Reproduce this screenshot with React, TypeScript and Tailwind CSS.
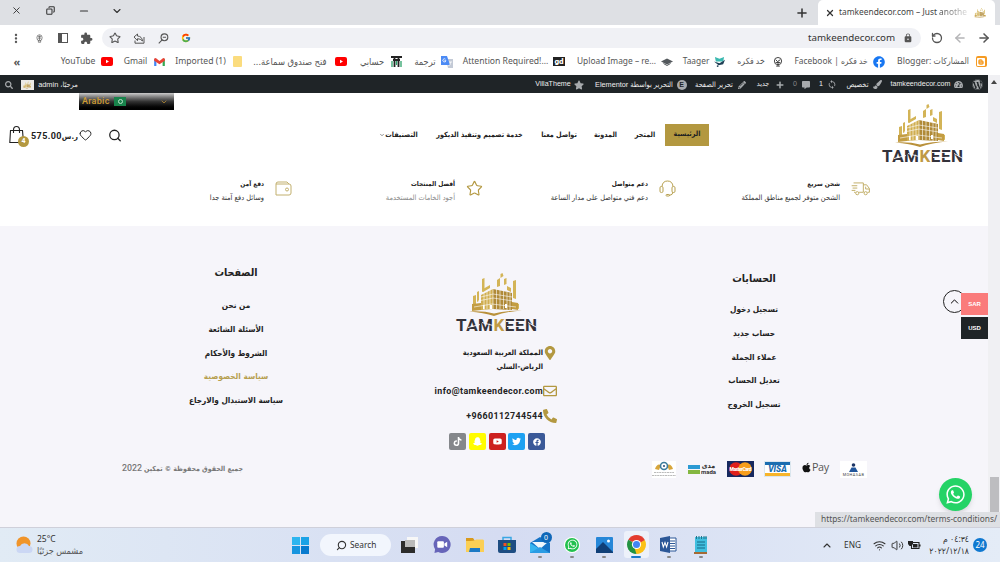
import type { ReactNode } from 'react'
import {
    FaApple, FaCommentAlt, FaFacebook, FaMapMarkerAlt, FaPaintBrush, FaPencilAlt, FaPhoneAlt, FaPlus,
    FaRegEnvelope, FaSearch, FaSnapchatGhost, FaStar, FaTachometerAlt, FaTiktok, FaTwitter, FaWhatsapp,
    FaWordpress, FaYoutube,
} from 'react-icons/fa'
import { FcGoogle } from 'react-icons/fc'
import { MdExtension, MdLock, MdMoreVert, MdSync } from 'react-icons/md'
import { SiBlogger } from 'react-icons/si'
import {
    ArrowLeft, ArrowRight, ChevronDown, ChevronUp, Copy, Heart, Minus, Plus, RotateCcw, Search, Star,
    Volume2, Wifi, X,
} from 'lucide-react'

interface ItemProps {
    box: string
    children?: ReactNode
}

// Fixed-width slot whose content stays centred
function Item({ box, children }: ItemProps) {
    return <div dir="ltr" className={`flex shrink-0 items-center justify-center whitespace-nowrap ${box}`}>{children}</div>
}

function Ar({ children, className = '' }: { children: ReactNode, className?: string }) {
    return <span dir="rtl" className={`whitespace-nowrap ${className}`}>{children}</span>
}

function TamkeenMark({ className }: { className: string }) {
    return (
        <svg viewBox="0 0 82 43" className={className}>
            <g fill="#d3b457">
                <path d="M17 23l3-1v14l-3 1zM21 19l2-1v10l-2 1zM26 6l2.500-1v13l-2.500 1zM41 7l3-2v8l-3 1zM44.500 1l2-1 1 3-3 2zM48 6l2.500-1v6L48 12zM57 8l3-1v19l-3-1zM60 30l3 1v5l-3-1z" />
                <path d="M27 16l7-4v3l-7 4zM51 13l4 2v4l-4-2z" />
            </g>
            <path d="M25 22l12-6v20l-12 1z" fill="#d0ae50" />
            <path d="M37 16l19 4v17l-19-1z" fill="#b08a37" />
            <path d="M16 31l9-1v7l-9 1zM56 29l6 1v7l-6-1z" fill="#c39d42" />
            <path d="M28 19v18M31 18v18M34 17v19M37 15v21M40.500 16v20M44 17v19M47.500 18v18M51 19v18M54 20v17" stroke="#fff" strokeWidth=".6" />
            <path d="M22 28l15-3 20 3M25 24l12-3 19 3M18 34l18-3 24 3" stroke="#fff" strokeWidth=".6" fill="none" />
            <path d="M13 38.500q14-1 25 2Q49 37.500 66 37.500q-16 1-28 5.500-10-3.500-25-4.500z" fill="#b9913b" />
            <path d="M34 32h2v4h-2zM49 31h2v4h-2zM27 32h1.500v4H27z" fill="#fff" />
        </svg>
    )
}

function TamkeenLogo() {
    return (
        <div className="flex h-[60px] w-[82px] flex-col">
            <TamkeenMark className="h-[43px] w-[82px]" />
            <svg viewBox="0 0 82 17" className="h-[17px] w-[82px] overflow-visible">
                <text x="0" y="14.500" fontFamily="Roboto" fontWeight="700" fontSize="17" textLength="81" lengthAdjust="spacing" fill="#33323a">
                    TAM<tspan fill="#c09a46">K</tspan>EEN
                </text>
                <path d="M0 5.700h3M12 11.500l12-3M26 6.500l11 3M50 5.500h18M51 10.500h16M72 6.500l9 5" stroke="#faf9fc" strokeWidth=".9" />
            </svg>
        </div>
    )
}

function TabStrip() {
    return (
        <div className="flex h-[25px] items-center bg-[#dee0e4] text-[#333]">
            <Item box="ml-[9px] -mt-[4px] h-[22px] w-[14px]"><X size={11} strokeWidth={2} /></Item>
            <Item box="ml-[20px] -mt-[4px] h-[22px] w-[14px]"><Copy size={9} strokeWidth={2.8} className="-scale-x-100" /></Item>
            <Item box="ml-[20px] -mt-[4px] h-[22px] w-[14px]"><Minus size={12} strokeWidth={2.4} /></Item>
            <Item box="ml-[19px] -mt-[4px] h-[22px] w-[14px]"><ChevronDown size={12} strokeWidth={2.2} /></Item>
            <Item box="ml-[671px] w-[14px]"><Plus size={14} strokeWidth={2.6} /></Item>
            <div className="ml-[9px] flex h-full w-[177px] items-center rounded-t-[5px] bg-white">
                <Item box="ml-[7px] w-[10px]"><X size={10} strokeWidth={3} /></Item>
                <div className="ml-[4px] w-[129px] whitespace-nowrap text-[8.4px] text-[#444]">
                    tamkeendecor.com – Just <span className="bg-linear-to-r from-[#444] to-[#ddd] bg-clip-text text-transparent">anothe</span>
                </div>
                <TamkeenMark className="ml-[3px] h-[10px] w-[19px]" />
            </div>
        </div>
    )
}

function AddressBar() {
    return (
        <div className="flex h-[26px] items-center bg-white text-[#555]">
            <Item box="ml-[9px] w-[14px]"><MdMoreVert size={15} /></Item>
            <Item box="ml-[9px] w-[14px]"><Emblem /></Item>
            <Item box="ml-[9px] w-[16px]">
                <div className="h-[10px] w-[10px] border-[1.5px] border-l-4 border-[#555]" />
            </Item>
            <Item box="ml-[8px] w-[14px]"><MdExtension size={13} /></Item>
            <div className="ml-[9px] flex h-[20px] w-[819px] items-center rounded-full bg-[#f0f1f5]">
                <Item box="ml-[6px] w-[14px]"><Star size={12} strokeWidth={2.2} /></Item>
                <Item box="ml-[10px] w-[14px]">
                    <svg viewBox="0 0 12 11" className="h-[11px] w-[12px]" fill="none" stroke="#555">
                        <path d="M1 4l3.500-3v2q4.500.3 5 5-2-2.300-5-2.300v2zM2 7.500v2.700h9V4" />
                    </svg>
                </Item>
                <Item box="ml-[10px] w-[14px]">
                    <svg viewBox="0 0 12 12" className="h-[11px] w-[11px]" fill="none" stroke="#555" strokeWidth="1.200">
                        <circle cx="7" cy="4.700" r="3.700" />
                        <path d="M4.500 7.500L.8 11.200M5.200 4.700h3.600" />
                    </svg>
                </Item>
                <Item box="ml-[9px] w-[14px]"><FcGoogle size={10} /></Item>
                <Item box="ml-[615px] w-[87px] text-[9.75px] text-[#333]">tamkeendecor.com</Item>
                <Item box="ml-[6px] w-[14px]"><MdLock size={10} /></Item>
            </div>
            <Item box="ml-[9px] w-[14px]"><RotateCcw size={12} strokeWidth={2.6} /></Item>
            <Item box="ml-[9px] w-[14px] text-[#b4b4b6]"><ArrowLeft size={14} strokeWidth={2.4} /></Item>
            <Item box="ml-[10px] w-[14px]"><ArrowRight size={14} strokeWidth={2.6} /></Item>
        </div>
    )
}

function Emblem() {
    return (
        <svg viewBox="0 0 12 12" className="h-[9px] w-[9px]" fill="none" stroke="#666" strokeWidth="1">
            <ellipse cx="6" cy="5" rx="3.500" ry="4" />
            <path d="M4 3.500h4M4 5.500h4M6 2v7M4.500 8v3h3v-3" />
        </svg>
    )
}

function YoutubeBadge() {
    return (
        <svg viewBox="0 0 12 9" className="h-[9px] w-[12px]">
            <rect width="12" height="9" rx="2" fill="#f00" />
            <path d="M5 2.700v3.600l3-1.800z" fill="#fff" />
        </svg>
    )
}

function GmailBadge() {
    return (
        <svg viewBox="0 0 12 9" className="h-[8px] w-[11px]">
            <path d="M0 1h2.500v8H0z" fill="#4285f4" />
            <path d="M9.500 1H12v8H9.500z" fill="#34a853" />
            <path d="M0 1q1-1.500 2.500-.5L6 3.300 9.500.5Q11-.5 12 1v2L6 7 0 3z" fill="#ea4335" />
        </svg>
    )
}

const bookmarks = [
    { text: 'YouTube', box: 'ml-[35px] w-[34px]', icon: <YoutubeBadge />, iconBox: 'ml-[6px] w-[12px]' },
    { text: 'Gmail', box: 'ml-[11px] w-[23px]', icon: <GmailBadge />, iconBox: 'ml-[6px] w-[12px]' },
    { text: 'Imported (1)', box: 'ml-[11px] w-[49px]', icon: <div className="h-[11px] w-[9px] rounded-[1px] bg-[#fbdc7e]" />, iconBox: 'ml-[6px] w-[12px]' },
    { text: 'فتح صندوق سماعة...', ar: true, box: 'ml-[9px] w-[76px] text-[9.4px]', icon: <YoutubeBadge />, iconBox: 'ml-[7px] w-[12px]' },
    {
        text: 'حسابي', ar: true, box: 'ml-[12px] w-[26px] text-[9.2px]', iconBox: 'ml-[5px] w-[12px]',
        icon: (
            <svg viewBox="0 0 11 11" className="h-[11px] w-[11px]">
                <path d="M0 1h11M2 4h7M3.500 1v10M7.500 1v10" stroke="#222" strokeWidth="1.800" />
                <path d="M1 5v6M5.500 5v4M10 5v6" stroke="#2fa36b" strokeWidth="1.300" />
            </svg>
        ),
    },
    {
        text: 'ترجمة', ar: true, box: 'ml-[12px] w-[22px] text-[9.2px]', iconBox: 'ml-[5px] w-[12px]',
        icon: (
            <svg viewBox="0 0 12 12" className="h-[12px] w-[12px]">
                <path d="M5 3h7v9H7z" fill="#c3cad6" />
                <path d="M0 0h6l3 9H0z" fill="#4c8bf5" />
                <path d="M4.500 3.200a1.600 1.600 0 1 0 .5 1.500H3.400M8 6h3M9.500 6q0 3-2 4" stroke="#fff" strokeWidth=".8" fill="none" />
            </svg>
        ),
    },
    {
        text: 'Attention Required!...', box: 'ml-[11px] w-[83px]', iconBox: 'ml-[6px] w-[12px]',
        icon: <span className="flex h-[9px] w-[12px] items-center justify-center bg-[#222] font-['Roboto'] text-[8px] font-black leading-none text-white">gd</span>,
    },
    {
        text: 'Upload Image – re...', box: 'ml-[12px] w-[79px] text-[8.4px]', iconBox: 'ml-[5px] w-[12px]',
        icon: (
            <svg viewBox="0 0 12 8" className="h-[8px] w-[12px]">
                <path d="M0 3.500L6 .5l6 3-6 3z" fill="#53585c" />
                <path d="M2.500 5.500L6 7.500l3.500-2" stroke="#53585c" fill="none" />
            </svg>
        ),
    },
    {
        text: 'Taager', box: 'ml-[10px] w-[26px] text-[8.4px]', iconBox: 'ml-[4px] w-[12px]',
        icon: (
            <svg viewBox="0 0 12 12" className="h-[11px] w-[11px]">
                <path d="M1 1l5 2 5-2-1 5H2z" fill="#3bb9b0" />
                <path d="M0 6l6 2 6-4-2 5-5 1z" fill="#1f3f55" />
                <circle cx="4" cy="11" r="1" fill="#1f3f55" />
            </svg>
        ),
    },
    {
        text: 'خد فكره', ar: true, box: 'ml-[12px] w-[28px]', iconBox: 'ml-[7px] w-[12px]',
        icon: (
            <svg viewBox="0 0 11 11" className="h-[10px] w-[10px]" fill="none" stroke="#333">
                <circle cx="5.500" cy="4.500" r="4" />
                <path d="M3 3l2 2 3-2M5.500 5v5M3.500 10h4M3 6h5" />
            </svg>
        ),
    },
    { text: 'خد فكره | Facebook', ar: true, box: 'ml-[11px] w-[72px] text-[8.4px]', icon: <FaFacebook size={12} color="#1877f2" />, iconBox: 'ml-[6px] w-[12px]' },
    {
        text: 'المشاركات :Blogger', ar: true, box: 'ml-[12px] w-[72px]', iconBox: 'ml-[6px] w-[12px]',
        icon: <span className="flex h-[11px] w-[11px] items-center justify-center rounded-[2px] bg-[#f59b23] text-white"><SiBlogger size={8} /></span>,
    },
]

function Bookmarks() {
    return (
        <div className="flex h-[24px] items-center pb-[3px] font-['Noto_Sans','DejaVu_Sans_Condensed',sans-serif] text-[8.6px] text-[#555]">
            <Item box="ml-[11px] w-[12px] text-[11px] font-bold">«</Item>
            <div className="ml-[3px] flex items-center">
                {bookmarks.map((b, i) => (
                    <div key={i} className="flex items-center">
                        <Item box={b.box}>{b.ar ? <Ar>{b.text}</Ar> : b.text}</Item>
                        <Item box={b.iconBox}>{b.icon}</Item>
                    </div>
                ))}
            </div>
        </div>
    )
}

function AdminBar() {
    return (
        <div className="flex h-[18px] w-[988px] items-center bg-[#1f2427] pt-px font-['Liberation_Sans','DejaVu_Sans_Condensed',sans-serif] text-[7.1px] text-[#eee]">
            <Item box="ml-[4px] w-[9px]"><FaSearch size={8} className="text-[#a7aaad]" /></Item>
            <Item box="ml-[8px] h-[10px] w-[13px] bg-[#eceae6]"><TamkeenMark className="h-[8px] w-[13px]" /></Item>
            <Item box="ml-[4px] w-[40px]"><Ar className="text-[7.4px]">مرحبًا، admin</Ar></Item>
            <Item box="ml-[458px] w-[34px]">VillaTheme</Item>
            <Item box="ml-[4px] w-[10px]"><FaStar size={10} color="#a7aaad" /></Item>
            <Item box="ml-[11px] w-[78px]"><Ar className="text-[7.3px]">التحرير بواسطة Elementor</Ar></Item>
            <Item box="ml-[3px] w-[11px]">
                <span className="flex h-[10px] w-[10px] items-center justify-center rounded-full bg-[#a7aaad] text-[7px] font-bold text-[#1f2427]">E</span>
            </Item>
            <Item box="ml-[8px] w-[38px]"><Ar className="text-[7.3px]">تحرير الصفحة</Ar></Item>
            <Item box="ml-[4px] w-[9px]"><FaPencilAlt size={8} color="#a7aaad" /></Item>
            <Item box="ml-[10px] w-[14px]"><Ar>جديد</Ar></Item>
            <Item box="ml-[5px] w-[9px]"><FaPlus size={8} color="#a7aaad" /></Item>
            <Item box="ml-[8px] w-[6px] text-[#888]">0</Item>
            <Item box="ml-[3px] w-[9px]"><FaCommentAlt size={8} color="#a7aaad" /></Item>
            <Item box="ml-[8px] w-[6px]">1</Item>
            <Item box="ml-[3px] w-[10px]"><MdSync size={11} color="#a7aaad" /></Item>
            <Item box="ml-[9px] w-[23px]"><Ar className="text-[7.4px]">تخصيص</Ar></Item>
            <Item box="ml-[4px] w-[9px]"><FaPaintBrush size={9} color="#a7aaad" /></Item>
            <Item box="ml-[9px] w-[59px]">tamkeendecor.com</Item>
            <Item box="ml-[4px] w-[9px]"><FaTachometerAlt size={9} color="#a7aaad" /></Item>
            <Item box="ml-[9px] w-[11px]"><FaWordpress size={11} color="#a7aaad" /></Item>
        </div>
    )
}

function LanguageSwitch() {
    return (
        <div className="ml-[79px] flex h-[17px] w-[95px] items-center bg-linear-to-b from-[#ccc] via-[#333] via-50% to-black text-[#cf9c33]">
            <span className="ml-[3px] w-[28px] font-['Roboto'] text-[9px] font-medium tracking-[0.3px]">Arabic</span>
            <span className="ml-[4px] flex h-[9px] w-[12px] items-center justify-center bg-[#18834b]">
                <span className="h-[5px] w-[5px] rounded-full border border-[#b9e0c9]" />
            </span>
            <ChevronDown size={8} className="ml-[34px]" />
        </div>
    )
}

const navItems = [
    { text: 'خدمة تصميم وتنفيذ الديكور', box: 'ml-[18px] w-[87px]' },
    { text: 'تواصل معنا', box: 'ml-[18px] w-[36px]' },
    { text: 'المدونة', box: 'ml-[17px] w-[23px]' },
    { text: 'المتجر', box: 'ml-[18px] w-[20px]' },
]

function BagIcon() {
    return (
        <div className="relative ml-[9px] h-[20px] w-[20px]">
            <svg viewBox="0 0 20 20" className="h-[20px] w-[20px]" fill="none" stroke="#222" strokeWidth="1.100">
                <path d="M1.500 5.500h12l1 12H.8z" />
                <path d="M4.500 8V5q0-3.500 3-3.500t3 3.500v3" />
            </svg>
            <span className="absolute top-[11px] left-[9px] flex h-[11px] w-[11px] items-center justify-center rounded-full bg-[#b39840] font-['Roboto'] text-[7px] font-bold text-white">4</span>
        </div>
    )
}

function SiteHeader() {
    return (
        <div className="h-[80px]">
            <LanguageSwitch />
            <div className="flex h-[50px] items-center font-['DejaVu_Sans_Condensed','DejaVu_Sans',sans-serif] text-[7.2px] font-bold text-[#222]">
                <BagIcon />
                <Item box="ml-[2px] w-[47px] pt-[3px]">
                    <span className="font-['Roboto'] text-[9px] tracking-[0.4px]">575.00</span>
                    <Ar className="text-[7.7px]">ر.س</Ar>
                </Item>
                <Item box="ml-[1px] w-[13px]"><Heart size={14} strokeWidth={1.8} /></Item>
                <Item box="ml-[16px] w-[14px]"><Search size={15} strokeWidth={2.2} /></Item>
                <Item box="ml-[257px] w-[6px]"><ChevronDown size={6} /></Item>
                <Item box="w-[33px]"><Ar>التصنيفات</Ar></Item>
                {navItems.map(n => <Item key={n.text} box={n.box}><Ar>{n.text}</Ar></Item>)}
                <Item box="ml-[10px] h-[22px] w-[44px] bg-[#b39840] pb-[3px]"><Ar>الرئيسية</Ar></Item>
                <div className="mt-[-2px] ml-[173px]"><TamkeenLogo /></div>
            </div>
        </div>
    )
}

function WalletIcon() {
    return (
        <svg viewBox="0 0 17 15" className="h-[15px] w-[17px]" fill="none" stroke="#c2b06e">
            <path d="M1 3q0-2 2-2h9l2 2M1 3h13q2 0 2 2v7q0 2-2 2H1z" />
            <circle cx="12" cy="8.500" r="1.500" />
        </svg>
    )
}

function HeadsetIcon() {
    return (
        <svg viewBox="0 0 17 17" className="h-[17px] w-[17px]" fill="none" stroke="#b7a04f">
            <path d="M3 6.500Q3.500 1 8.500 1T14 6.500M14 12q0 3-4 3.500" />
            <rect x="1" y="6.500" width="3" height="6" rx="1.300" />
            <rect x="13" y="6.500" width="3" height="6" rx="1.300" />
            <rect x="7" y="14.500" width="3.500" height="1.500" rx=".7" />
        </svg>
    )
}

function TruckIcon() {
    return (
        <svg viewBox="0 0 20 15" className="h-[14px] w-[20px]" fill="none" stroke="#c0ab62">
            <path d="M2 1h10.500v10H8M12.500 3h3.500l3 4v4h-2M4 11H2.500M0 4h6M1 6.500h5M0 9h4M15 5v2.500h4" />
            <circle cx="6" cy="12" r="1.700" />
            <circle cx="15" cy="12" r="1.700" />
        </svg>
    )
}

const features = [
    { title: 'دفع آمن', text: 'وسائل دفع آمنة جدا', color: 'text-[#333]', box: 'w-[264px]', icon: <WalletIcon />, iconBox: 'ml-[10px] w-[18px]' },
    { title: 'أفضل المنتجات', text: 'أجود الخامات المستخدمة', color: 'text-[#8a8a8a]', box: 'w-[163px]', icon: <Star size={17} strokeWidth={1.6} color="#b39840" />, iconBox: 'ml-[10px] w-[18px]' },
    { title: 'دعم متواصل', text: 'دعم فني متواصل على مدار الساعة', color: 'text-[#333]', box: 'w-[165px]', icon: <HeadsetIcon />, iconBox: 'ml-[10px] w-[18px]' },
    { title: 'شحن سريع', text: 'الشحن متوفر لجميع مناطق المملكة', color: 'text-[#333]', box: 'w-[164px]', icon: <TruckIcon />, iconBox: 'ml-[11px] w-[20px]' },
]

function Features() {
    return (
        <div className="flex h-[53px] items-start pt-[5px] font-['DejaVu_Sans_Condensed','DejaVu_Sans',sans-serif]">
            {features.map(f => (
                <div key={f.title} className="flex">
                    <div dir="rtl" className={`${f.box} whitespace-nowrap leading-[13px]`}>
                        <div className="text-[6.5px] font-bold text-[#222]">{f.title}</div>
                        <div className={`text-[7.4px] ${f.color}`}>{f.text}</div>
                    </div>
                    <Item box={`${f.iconBox} h-[21px]`}>{f.icon}</Item>
                </div>
            ))}
        </div>
    )
}

const pageLinks = ['من نحن', 'الأسئلة الشائعة', 'الشروط والأحكام', 'سياسة الخصوصية', 'سياسة الاستبدال والارجاع']
const accountLinks = ['تسجيل دخول', 'حساب جديد', 'عملاء الجملة', 'تعديل الحساب', 'تسجيل الخروج']

function LinkColumn({ title, links, active, className }: { title: string, links: string[], active?: string, className: string }) {
    return (
        <div dir="rtl" className={`flex flex-col items-center whitespace-nowrap font-bold text-[#222] ${className}`}>
            <div className="text-[10.6px] leading-[20px]">{title}</div>
            {links.map(l => (
                <div key={l} className={`h-[23.8px] text-[8.2px] leading-[22px] ${l === active ? 'text-[#b7a04f]' : ''}`}>{l}</div>
            ))}
        </div>
    )
}

const socials = [
    { bg: 'bg-[#85878b]', icon: <FaTiktok size={9} /> },
    { bg: 'bg-[#fffc00]', icon: <FaSnapchatGhost size={9} /> },
    { bg: 'bg-[#cd201f]', icon: <FaYoutube size={9} /> },
    { bg: 'bg-[#1da1f2]', icon: <FaTwitter size={9} /> },
    { bg: 'bg-[#3b5998]', icon: <FaFacebook size={8} /> },
]

function Contact() {
    return (
        <div className="flex w-[140px] flex-col items-end font-bold text-[#222]">
            <div className="mr-[19px]"><TamkeenLogo /></div>
            <div className="mt-[13px] flex items-start">
                <div dir="rtl" className="whitespace-nowrap text-[7.4px] leading-[13.5px]">
                    المملكة العربية السعودية<br />الرياض-السلي
                </div>
                <Item box="w-[14px]"><FaMapMarkerAlt size={14} color="#b39840" /></Item>
            </div>
            <div className="mt-[9px] flex h-[18px] items-center font-['Roboto'] text-[8.9px] tracking-[0.4px]">
                info@tamkeendecor.com
                <FaRegEnvelope size={14} color="#b39840" />
            </div>
            <div className="mt-[7px] flex h-[18px] items-center font-['Roboto'] text-[8.9px] tracking-[0.4px]">
                +9660112744544
                <FaPhoneAlt size={14} color="#b39840" />
            </div>
            <div className="mt-[8px] mr-[12px] flex gap-[2.7px]">
                {socials.map(s => (
                    <div key={s.bg} className={`flex h-[17px] w-[17px] items-center justify-center rounded-[2px] text-white ${s.bg}`}>{s.icon}</div>
                ))}
            </div>
        </div>
    )
}

function PaymentLogos() {
    return (
        <div className="flex items-center">
            <Item box="h-[17px] w-[24px] bg-white">
                <svg viewBox="0 0 24 17" className="h-[17px] w-[24px]">
                    <path d="M3 8q2-6 6-4l-2 5zM21 8q-2-6-6-4l2 5z" fill="#d8a63b" />
                    <circle cx="12" cy="5" r="3.500" fill="none" stroke="#3c7d9d" strokeWidth="1.600" />
                    <circle cx="12" cy="5" r="1" fill="#234a78" />
                    <path d="M2 11.500h20M0 14.500h24" stroke="#aaa" strokeWidth=".8" strokeDasharray="2 .6" />
                </svg>
            </Item>
            <div className="ml-[12px] flex h-[15px] w-[28px] items-center">
                <div className="flex flex-col gap-[1px]">
                    <div className="h-[4px] w-[12px] bg-[#2b9ad3]" />
                    <div className="h-[4px] w-[12px] bg-[#84b740]" />
                </div>
                <div className="ml-[1px] flex flex-col items-center font-bold leading-[6px] text-[#333]">
                    <Ar className="text-[7px]">مدى</Ar>
                    <span className="font-['Roboto'] text-[6px]">mada</span>
                </div>
            </div>
            <Item box="ml-[11px] h-[16px] w-[27px] bg-[#17295f]">
                <svg viewBox="0 0 27 16" className="h-[16px] w-[27px]">
                    <circle cx="9" cy="8" r="6.800" fill="#e0201b" />
                    <circle cx="18" cy="8" r="6.800" fill="#f79e1b" />
                    <text x="2.500" y="10" textLength="22" fontFamily="Roboto" fontWeight="900" fontSize="5" fill="#fff">MasterCard</text>
                </svg>
            </Item>
            <div className="ml-[10px] flex h-[16px] w-[27px] flex-col border border-[#dbe6ee] bg-white">
                <div className="h-[3px] bg-[#1a6db0]" />
                <div className="flex flex-1 items-center justify-center font-['Roboto'] text-[8.5px] font-black italic leading-none text-[#1a6db0]">VISA</div>
                <div className="h-[3px] bg-[#f7b42a]" />
            </div>
            <div className="ml-[10px] flex h-[16px] w-[28px] items-center pb-[3px] font-['Open_Sans'] text-[10.8px] tracking-[-0.4px] text-[#555]">
                <FaApple size={11} color="#111" className="shrink-0" />Pay
            </div>
            <div className="ml-[11px] flex h-[17px] w-[27px] flex-col items-center bg-white pt-[2px]">
                <svg viewBox="0 0 9 9" className="h-[9px] w-[9px]">
                    <circle cx="4.500" cy="2" r="1.800" fill="#1d3565" />
                    <path d="M2.500 4.500h4L9 9H0z" fill="#22569b" />
                </svg>
                <span className="font-['Roboto'] text-[3.8px] leading-[5px] tracking-[0.5px] text-[#444]">MOHASAB</span>
            </div>
        </div>
    )
}

function Footer() {
    return (
        <div className="h-[301px] bg-[#f6f5fa] font-['DejaVu_Sans_Condensed','DejaVu_Sans',sans-serif]">
            <div className="flex h-[233px] items-start">
                <LinkColumn title="الصفحات" links={pageLinks} active="سياسة الخصوصية" className="mt-[36px] ml-[176px] w-[120px] [&>:first-child]:h-[32px]" />
                <div className="mt-[47px] ml-[121px]"><Contact /></div>
                <LinkColumn title="الحسابات" links={accountLinks} className="mt-[42px] ml-[137px] w-[120px] [&>:first-child]:h-[30px]" />
            </div>
            <div className="flex h-[20px] items-center">
                <Item box="ml-[122px] w-[121px] pb-[2px] text-[7px] font-bold text-[#777]"><Ar>جميع الحقوق محفوظة © تمكين <span className="font-['Roboto'] text-[8.8px] font-medium tracking-[0.4px]">2022</span></Ar></Item>
                <div className="ml-[409px]"><PaymentLogos /></div>
            </div>
        </div>
    )
}

function FloatingWidgets() {
    return (
        <>
            <div className="absolute top-[290px] left-[943px] flex h-[23px] w-[23px] items-center justify-center rounded-full border border-[#222]">
                <ChevronUp size={13} strokeWidth={1.8} />
            </div>
            <div className="absolute top-[293px] left-[961px] flex w-[27px] flex-col gap-[2px] font-['Liberation_Sans'] text-[6px] font-bold text-white">
                <div className="flex h-[22px] items-center justify-center bg-[#fa7b7b]">SAR</div>
                <div className="flex h-[22px] items-center justify-center bg-[#1f2427]">USD</div>
            </div>
            <div className="absolute top-[478px] left-[939px] flex h-[33px] w-[33px] items-center justify-center rounded-full bg-[#25d366] text-white shadow-md">
                <FaWhatsapp size={21} />
            </div>
            <div className="absolute top-[75px] left-[988px] flex h-[452px] w-[12px] flex-col items-center bg-[#f0f0f3]">
                <div className="mt-[5px] h-0 w-0 border-x-[3px] border-b-[4px] border-x-transparent border-b-[#444]" />
                <div className="mt-[393px] h-[40px] w-[9px] bg-[#bdbdc0]" />
            </div>
            <div className="absolute top-[512px] left-[815px] flex h-[15px] w-[185px] items-center whitespace-nowrap bg-[#dee0e4] pl-[6px] text-[8.35px] text-[#555]">
                https://tamkeendecor.com/terms-conditions/
            </div>
        </>
    )
}

function ChromeIcon() {
    return (
        <svg viewBox="0 0 20 20" className="h-[19px] w-[19px]">
            <path d="M10 10L1.340 5a10 10 0 0 1 17.320 0z" fill="#e33b2e" />
            <path d="M10 10L18.660 5A10 10 0 0 1 10 20z" fill="#fbc116" />
            <path d="M10 10L10 20A10 10 0 0 1 1.340 5z" fill="#229342" />
            <path d="M10 5.200h8.700L14 8z" fill="#e33b2e" />
            <path d="M14 12.500L10 20l-2-6z" fill="#fbc116" />
            <circle cx="10" cy="10" r="4.800" fill="#fff" />
            <circle cx="10" cy="10" r="3.700" fill="#4285f4" />
        </svg>
    )
}

const taskIcons: { box: string, icon: ReactNode, open?: boolean, active?: boolean }[] = [
    {
        box: 'w-[32px]',
        icon: (
            <svg viewBox="0 0 18 16" className="h-[16px] w-[18px]">
                <path d="M7 0h11v11H7z" fill="#f7f7f7" />
                <path d="M1 4h14v12H1z" fill="#2b2b2b" />
                <path d="M5 3h10v7H5z" fill="#bababa" />
            </svg>
        ),
    },
    {
        box: 'w-[33px]',
        icon: (
            <svg viewBox="0 0 18 18" className="h-[17px] w-[18px]">
                <path d="M9 0a9 9 0 1 1-4 17l-4 1 .7-4A9 9 0 0 1 9 0z" fill="#6765b9" />
                <rect x="4" y="5.500" width="7" height="7" rx="1" fill="#fff" />
                <path d="M11.500 8l3-2v6l-3-2z" fill="#fff" />
            </svg>
        ),
    },
    {
        box: 'w-[33px]',
        icon: (
            <svg viewBox="0 0 18 16" className="h-[16px] w-[18px]">
                <path d="M0 1h7l2 3H0z" fill="#d99a1c" />
                <path d="M0 4q9 0 10-1.500h7l1 1V15H0z" fill="#fbcf55" />
                <path d="M4 11h10v4H3z" fill="#1c79c4" />
            </svg>
        ),
    },
    {
        box: 'w-[32px]',
        icon: (
            <svg viewBox="0 0 18 18" className="h-[18px] w-[18px]">
                <path d="M5 5V1.500h8V5" fill="none" stroke="#3aa7e4" strokeWidth="1.500" />
                <path d="M0 4h18v11q0 2-2 2H2q-2 0-2-2z" fill="#1e4d82" />
                <path d="M5.500 7h3v3h-3z" fill="#f25022" /><path d="M9.500 7h3v3h-3z" fill="#7fba00" />
                <path d="M5.500 11h3v3h-3z" fill="#00a4ef" /><path d="M9.500 11h3v3h-3z" fill="#ffb900" />
            </svg>
        ),
    },
    {
        box: 'w-[33px]', open: true,
        icon: (
            <div className="relative">
                <svg viewBox="0 0 20 16" className="h-[16px] w-[20px]">
                    <path d="M0 6l10-6 10 6v10H0z" fill="#1573c6" />
                    <path d="M2 5h16L10 12z" fill="#eef6fd" />
                    <path d="M0 6l10 6-10 4z" fill="#35b4f0" />
                    <path d="M0 16l10-6 10 6z" fill="#2a9ce4" />
                </svg>
                <span className="absolute -top-[5px] left-[11px] flex h-[11px] w-[11px] items-center justify-center rounded-full bg-[#0f67b8] text-[7px] text-white">0</span>
            </div>
        ),
    },
    {
        box: 'w-[32px]', open: true,
        icon: <span className="flex h-[16px] w-[16px] items-center justify-center rounded-full bg-white text-white"><span className="flex h-[14px] w-[14px] items-center justify-center rounded-full bg-[#22c04e]"><FaWhatsapp size={11} /></span></span>,
    },
    {
        box: 'w-[32px]', open: true,
        icon: (
            <svg viewBox="0 0 17 16" className="h-[16px] w-[17px]">
                <rect width="17" height="16" rx="1" fill="#2687d8" />
                <path d="M0 16V12l7-7 10 10v1z" fill="#103f77" />
                <circle cx="12.500" cy="4" r="1.500" fill="#fff" />
            </svg>
        ),
    },
    { box: 'w-[32px]', open: true, active: true, icon: <ChromeIcon /> },
    {
        box: 'w-[33px]', open: true,
        icon: (
            <svg viewBox="0 0 17 17" className="h-[17px] w-[17px]">
                <path d="M8 2h8v13H8z" fill="#fff" stroke="#2b5797" />
                <path d="M10 5h5M10 7.500h5M10 10h5M10 12.500h5" stroke="#2b5797" />
                <path d="M0 2l10-2v17L0 15z" fill="#2b5797" />
                <path d="M2 6l1.300 5L5 6.500 6.600 11 8 6" stroke="#fff" strokeWidth="1.100" fill="none" />
            </svg>
        ),
    },
    {
        box: 'w-[32px]', open: true,
        icon: (
            <svg viewBox="0 0 14 18" className="h-[18px] w-[14px]">
                <path d="M1 1h12v16H1z" fill="#41bfdf" />
                <path d="M0 16h13v2H0z" fill="#a56a35" />
                <path d="M3 6h8M3 9h8M3 12h8" stroke="#176a88" strokeWidth="1.200" />
                <path d="M2.500 0v3M5 0v3M7.500 0v3M10 0v3M12 0v3" stroke="#22758c" />
            </svg>
        ),
    },
]

function Taskbar() {
    return (
        <div className="flex h-[35px] items-center border-t border-[#cfd0da] bg-linear-to-r from-[#e1ebf5] via-[#d5dcf2] via-50% to-[#e4ecf7] font-['Noto_Sans','DejaVu_Sans_Condensed',sans-serif] text-[#333]">
            <svg viewBox="0 0 17 18" className="ml-[16px] h-[18px] w-[17px]">
                <circle cx="7.500" cy="7.500" r="7" fill="#f0942a" />
                <path d="M4 17a3.500 3.500 0 0 1 0-7 5 5 0 0 1 9 0 3.500 3.500 0 0 1 0 7z" fill="#cbd7f4" />
            </svg>
            <div className="ml-[4px] w-[47px] whitespace-nowrap leading-[12px]">
                <div className="text-[8.5px]">25°C</div>
                <div className="flex"><Ar className="text-[9.1px] text-[#555]">مشمس جزئيًا</Ar></div>
            </div>
            <div className="ml-[208px] grid h-[17px] w-[17px] grid-cols-2 gap-px">
                <div className="bg-[#2db5ef]" /><div className="bg-[#1ba2e6]" /><div className="bg-[#1795df]" /><div className="bg-[#087ace]" />
            </div>
            <div className="ml-[11px] flex h-[22px] w-[71px] items-center rounded-full bg-[#f2f6fd]">
                <Search size={11} strokeWidth={2.4} className="ml-[16px] -scale-x-100" />
                <span className="ml-[3px] text-[8.3px]">Search</span>
            </div>
            <div className="ml-[2px] flex">
                {taskIcons.map((t, i) => (
                    <div key={i} className={`flex h-[34px] shrink-0 flex-col items-center pt-[3px] ${t.box}`}>
                        <div className={`flex h-[27px] w-[25px] items-center justify-center rounded-[3px] ${t.active ? 'bg-[#edf1fa]' : ''}`}>{t.icon}</div>
                        {t.open && <div className={`-mt-[2px] h-[2px] rounded-full ${t.active ? 'w-[10px] bg-[#1a7ac9]' : 'w-[4px] bg-[#888]'}`} />}
                    </div>
                ))}
            </div>
            <Item box="ml-[104px] w-[12px]"><ChevronUp size={13} strokeWidth={2.2} /></Item>
            <Item box="ml-[11px] w-[17px] text-[8.3px]">ENG</Item>
            <Item box="ml-[11px] w-[14px]"><Wifi size={13} strokeWidth={2} /></Item>
            <Item box="ml-[4px] w-[14px]"><Volume2 size={13} strokeWidth={1.8} /></Item>
            <Item box="ml-[4px] w-[13px]">
                <svg viewBox="0 0 13 10" className="h-[10px] w-[13px]">
                    <path d="M3.500 2.500H11v6H3.500zM12 4.500v2" fill="none" stroke="#222" strokeWidth="1.100" />
                    <path d="M0 1h5v3L3.500 6H1.500L0 4zM5 4h4.500v3.500H5z" fill="#222" />
                </svg>
            </Item>
            <div dir="rtl" className="ml-[7px] w-[41px] whitespace-nowrap text-[8.6px] leading-[12px]">
                <div>٠٤:٣٤ م</div>
                <div>٢٠٢٢/١٢/١٨</div>
            </div>
            <Item box="ml-[4px] h-[14px] w-[14px] rounded-full bg-[#0f78d0] text-[8px] text-white">24</Item>
        </div>
    )
}

export default function App() {
    return (
        <div className="relative h-[562px] w-[1000px] overflow-hidden bg-white font-['Noto_Sans','DejaVu_Sans',sans-serif] leading-none">
            <TabStrip />
            <AddressBar />
            <Bookmarks />
            <AdminBar />
            <SiteHeader />
            <Features />
            <Footer />
            <Taskbar />
            <FloatingWidgets />
        </div>
    )
}
